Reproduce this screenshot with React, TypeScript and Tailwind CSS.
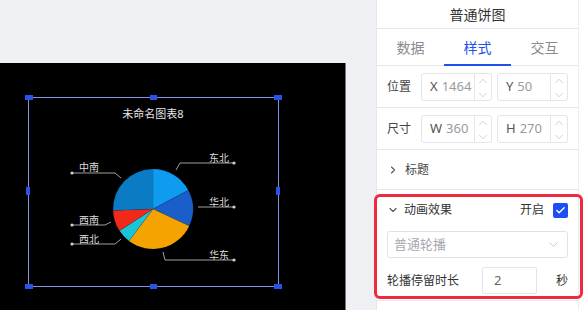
import React from "react";
import { ChevronUp, ChevronDown, ChevronRight, Check } from "lucide-react";

const slices = [
  { name: "东北", from: 0, to: 62, color: "#0f9cf0" },
  { name: "华北", from: 62, to: 115, color: "#1a5fc9" },
  { name: "华东", from: 115, to: 217, color: "#f5a300" },
  { name: "西北", from: 217, to: 237, color: "#19c5d8" },
  { name: "西南", from: 237, to: 268, color: "#f0291a" },
  { name: "中南", from: 268, to: 360, color: "#0b7bc4" },
];

const cx = 153;
const cy = 209;
const r = 40;

function pt(deg: number) {
  const a = (deg * Math.PI) / 180;
  return [cx + r * Math.sin(a), cy - r * Math.cos(a)];
}

function slicePath(from: number, to: number) {
  const [x1, y1] = pt(from);
  const [x2, y2] = pt(to);
  const large = to - from > 180 ? 1 : 0;
  return `M${cx},${cy} L${x1},${y1} A${r},${r} 0 ${large} 1 ${x2},${y2} Z`;
}

// leader lines: points + label position
const labels = [
  { text: "中南", x: 79, y: 171, line: "M72,173 L115,173 L121,178", dot: [72, 173] },
  { text: "东北", x: 209, y: 162, line: "M234,163 L180,163 L176,170", dot: [234, 163] },
  { text: "华北", x: 209, y: 206, line: "M234,207 L198,207", dot: [234, 207] },
  { text: "西南", x: 79, y: 224, line: "M72,225 L105,225 L111,222", dot: [72, 225] },
  { text: "西北", x: 79, y: 243, line: "M72,244 L115,244 L121,239", dot: [72, 244] },
  { text: "华东", x: 209, y: 259, line: "M163,252 L165,260 L234,260", dot: [234, 260] },
];

function ChartCanvas() {
  const handles = [
    [25, 95, 8, 5],
    [150, 95, 7, 5],
    [274, 95, 8, 5],
    [26, 187, 4, 8],
    [276, 187, 4, 8],
    [25, 284, 8, 5],
    [150, 284, 7, 5],
    [274, 284, 8, 5],
  ];
  return (
    <svg width="345" height="247" viewBox="0 63 345 247" className="block">
      <rect x="28.5" y="97.5" width="250" height="189" fill="none" stroke="#8193e6" strokeWidth="1" />
      {handles.map(([x, y, w, h], i) => (
        <rect key={i} x={x} y={y} width={w} height={h} fill="#2a52e6" />
      ))}
      <text x="153" y="118" textAnchor="middle" fontSize="11" fill="#e6e6e6">
        未命名图表8
      </text>
      {slices.map((s) => (
        <path key={s.name} d={slicePath(s.from, s.to)} fill={s.color} stroke="rgba(0,0,0,0.15)" strokeWidth="0.5" />
      ))}
      {labels.map((l) => (
        <g key={l.text}>
          <path d={l.line} fill="none" stroke="#a0a0a0" strokeWidth="1" />
          <circle cx={l.dot[0]} cy={l.dot[1]} r="1.6" fill="#d0d0d0" />
          <text x={l.x} y={l.y} fontSize="10" fill="#dcdcdc">
            {l.text}
          </text>
        </g>
      ))}
    </svg>
  );
}

function NumberBox({ axis, value }: { axis: string; value: string }) {
  return (
    <div className="flex-1 h-[28px] flex border border-[#e3e5ea] rounded-[3px] bg-white">
      <div className="flex-1 flex items-center pl-[8px] gap-[4px] text-[13px]">
        <span className="text-[#555]">{axis}</span>
        <span className="text-[#9a9aa2]">{value}</span>
      </div>
      <div className="w-[17px] flex flex-col border-l border-[#e3e5ea]">
        <div className="flex-1 flex items-center justify-center">
          <ChevronUp size={14} strokeWidth={1} className="text-[#b0b0b6]" />
        </div>
        <div className="flex-1 flex items-center justify-center">
          <ChevronDown size={14} strokeWidth={1} className="text-[#b0b0b6]" />
        </div>
      </div>
    </div>
  );
}

export default function App() {
  return (
    <div className="relative w-[584px] h-[310px] flex overflow-hidden bg-[#eff0f4] font-['Noto_Sans','Noto_Sans_CJK_SC',sans-serif] text-[#333]">
      {/* canvas area */}
      <div className="w-[376px] pt-[63px]">
        <div className="w-[346px] h-[247px] bg-black border-r border-[#777]">
          <ChartCanvas />
        </div>
      </div>

      {/* settings panel */}
      <div className="w-[208px] flex bg-white border-l border-[#e6e7ec]">
        <div className="w-[202px] border-r border-[#eceef2]">
          <div className="h-[29px] flex items-center justify-center border-b border-[#e6e7ec] text-[14px] text-[#333]">
            普通饼图
          </div>
          <div className="h-[37px] flex border-b border-[#e6e7ec] text-[14px]">
            <div className="flex-1 flex items-center justify-center text-[#8a8a90]">数据</div>
            <div className="flex-1 relative flex items-center justify-center text-[#2150f0]">
              样式
              <div className="absolute bottom-[-1px] left-0 right-0 h-[2px] bg-[#2150f0]" />
            </div>
            <div className="flex-1 flex items-center justify-center text-[#8a8a90]">交互</div>
          </div>
          <div className="h-[42px] flex items-center px-[10px] border-b border-[#e6e7ec]">
            <span className="w-[34px] text-[12px] text-[#444]">位置</span>
            <div className="flex-1 flex gap-[5px]">
              <NumberBox axis="X" value="1464" />
              <NumberBox axis="Y" value="50" />
            </div>
          </div>
          <div className="h-[42px] flex items-center px-[10px] border-b border-[#e6e7ec]">
            <span className="w-[34px] text-[12px] text-[#444]">尺寸</span>
            <div className="flex-1 flex gap-[5px]">
              <NumberBox axis="W" value="360" />
              <NumberBox axis="H" value="270" />
            </div>
          </div>
          <div className="h-[40px] flex items-center pl-[10px] gap-[6px] border-b border-[#e6e7ec] text-[12px] text-[#444]">
            <ChevronRight size={12} strokeWidth={2.2} className="text-[#555]" />
            标题
          </div>
          <div className="pt-[10px] px-[10px] pb-[6px] border-b border-[#e6e7ec]">
            <div className="h-[20px] flex items-center text-[12px] text-[#333]">
              <ChevronDown size={12} strokeWidth={2.2} className="text-[#555]" />
              <span className="ml-[5px]">动画效果</span>
              <span className="ml-auto mr-[9px]">开启</span>
              <span className="w-[15px] h-[15px] rounded-[2px] bg-[#1f4ef5] flex items-center justify-center">
                <Check size={11} strokeWidth={3} className="text-white" />
              </span>
            </div>
            <div className="mt-[11px] h-[27px] flex items-center px-[6px] border border-[#e0e2e8] rounded-[3px] text-[13px] text-[#a8a8b0]">
              普通轮播
              <ChevronDown size={15} strokeWidth={1} className="ml-auto text-[#b0b0b6]" />
            </div>
            <div className="mt-[9px] h-[27px] flex items-center text-[12px] text-[#333]">
              <span className="w-[95px]">轮播停留时长</span>
              <div className="w-[55px] h-[27px] flex items-center pl-[11px] border border-[#e3e5ea] rounded-[2px] text-[13px] text-[#666]">
                2
              </div>
              <span className="ml-auto">秒</span>
            </div>
          </div>
        </div>
        <div className="flex-1 bg-white" />
      </div>

      {/* highlight annotation */}
      <div className="absolute left-[374px] top-[194px] w-[209px] h-[105px] border-[3px] border-[#f02a3c] rounded-[6px]" />
    </div>
  );
}
